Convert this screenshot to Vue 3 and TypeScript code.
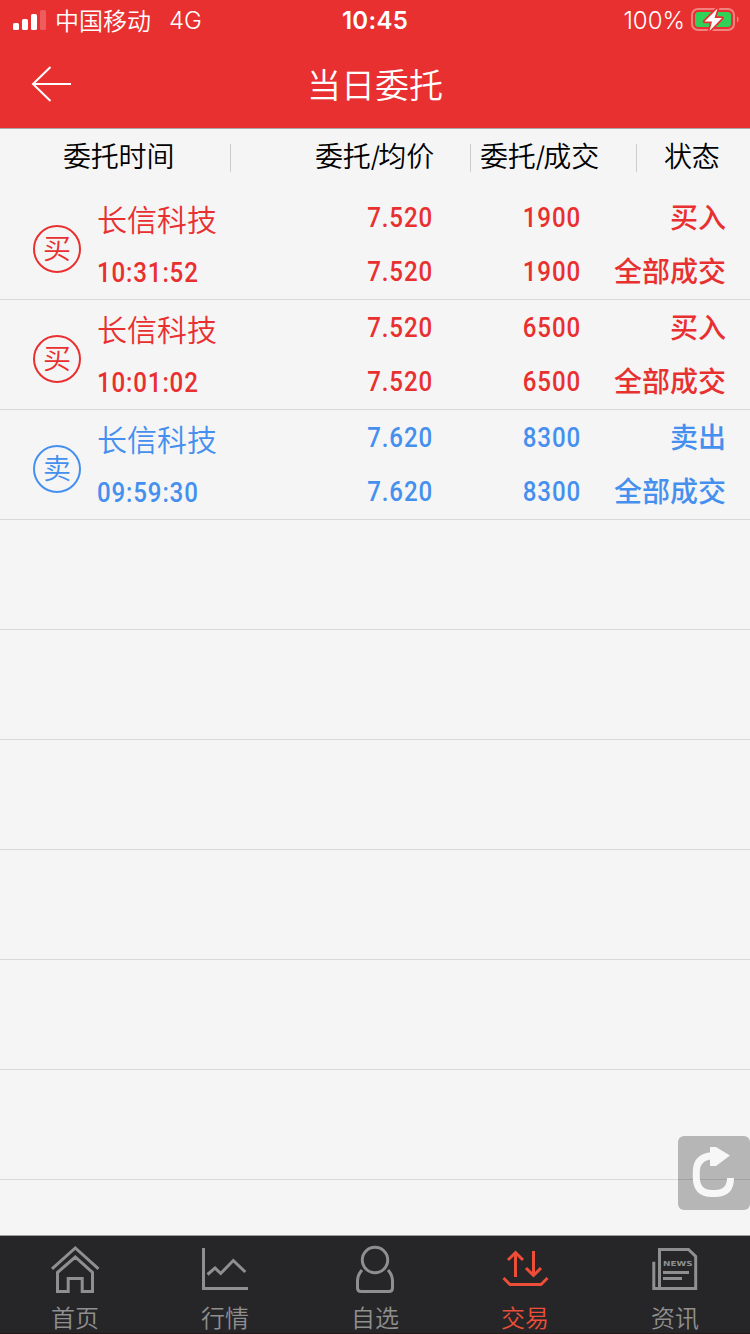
<script setup lang="ts">
interface Order {
  side: 'buy' | 'sell'
  mark: string
  name: string
  time: string
  price: string
  average: string
  amount: string
  filled: string
  action: string
  status: string
}

const orders: Order[] = [
  { side: 'buy', mark: '买', name: '长信科技', time: '10:31:52', price: '7.520', average: '7.520', amount: '1900', filled: '1900', action: '买入', status: '全部成交' },
  { side: 'buy', mark: '买', name: '长信科技', time: '10:01:02', price: '7.520', average: '7.520', amount: '6500', filled: '6500', action: '买入', status: '全部成交' },
  { side: 'sell', mark: '卖', name: '长信科技', time: '09:59:30', price: '7.620', average: '7.620', amount: '8300', filled: '8300', action: '卖出', status: '全部成交' },
]

const emptyRows = 6

const tabs = [
  { id: 'home', label: '首页' },
  { id: 'market', label: '行情' },
  { id: 'watch', label: '自选' },
  { id: 'trade', label: '交易' },
  { id: 'news', label: '资讯' },
]
const activeTab = 'trade'
</script>

<template>
  <div class="screen">
    <div class="status-bar">
      <div class="carrier">
        <svg class="signal" width="34" height="22" viewBox="0 0 34 22">
          <rect x="0" y="14" width="6" height="7" rx="1.6" />
          <rect x="9" y="10" width="6" height="11" rx="1.6" />
          <rect x="18" y="5" width="6" height="16" rx="1.6" />
          <rect x="27" y="1" width="6" height="20" rx="1.6" opacity=".22" />
        </svg>
        <span class="operator">中国移动</span>
        <span class="network">4G</span>
      </div>
      <div class="clock">10:45</div>
      <div class="power">
        <span class="percent">100%</span>
        <svg class="battery" width="50" height="26" viewBox="0 0 50 26">
          <rect x="2" y="3" width="42" height="21" rx="6" fill="none" stroke="#fff" stroke-opacity=".4" stroke-width="2" />
          <path d="M47 10.500c2 1 2 5 0 6z" fill="#fff" opacity=".45" />
          <rect x="5" y="6" width="36" height="15" rx="3.500" fill="#2fd158" />
          <path d="M27.500 2.500L14.500 15.500h7.500L19.500 25 32 12h-7.500z" fill="#fff" stroke="#e93030" stroke-width="3.500" paint-order="stroke" stroke-linejoin="round" />
        </svg>
      </div>
    </div>

    <div class="nav">
      <div class="nav-side">
        <svg width="42" height="38" viewBox="0 0 42 38" fill="none" stroke="#fff" stroke-width="2">
          <path d="M19.500 2L2 19 19.500 36M2 19h38" />
        </svg>
      </div>
      <div class="nav-title">当日委托</div>
      <div class="nav-side"></div>
    </div>

    <div class="columns">
      <div class="col c1">委托时间</div>
      <div class="col c2">委托<i>/</i>均价</div>
      <div class="col c3">委托<i>/</i>成交</div>
      <div class="col c4">状态</div>
    </div>

    <div class="list">
      <div v-for="(o, i) in orders" :key="i" class="row" :class="o.side">
        <div class="mark">{{ o.mark }}</div>
        <div class="stock">
          <div class="name">{{ o.name }}</div>
          <div class="time"><span class="num">{{ o.time }}</span></div>
        </div>
        <div class="cell price">
          <div><span class="num">{{ o.price }}</span></div>
          <div><span class="num">{{ o.average }}</span></div>
        </div>
        <div class="cell amount">
          <div><span class="num">{{ o.amount }}</span></div>
          <div><span class="num">{{ o.filled }}</span></div>
        </div>
        <div class="cell state">
          <div>{{ o.action }}</div>
          <div>{{ o.status }}</div>
        </div>
      </div>
      <div v-for="n in emptyRows" :key="'e' + n" class="row"></div>
    </div>

    <div class="refresh">
      <svg width="72" height="74" viewBox="0 0 72 74">
        <path d="M34 19.800Q18.300 21 18.300 36v5Q18.300 57.500 34 57.500h3Q52.500 57.500 52.500 42" fill="none" stroke="#f7f7f7" stroke-width="7" />
        <path d="M32 11h6l14 8.500L38 30h-6z" fill="#f7f7f7" />
      </svg>
    </div>

    <div class="tabbar">
      <div v-for="t in tabs" :key="t.id" class="tab" :class="{ active: t.id === activeTab }">
        <svg width="54" height="54" viewBox="0 0 54 54" fill="none" stroke="currentColor" stroke-width="3">
          <template v-if="t.id === 'home'">
            <path d="M4 29.800L27.300 9 50.500 29.800" />
            <path d="M9.500 33.500L27.300 18 44.500 33.500v19H34.200V39.500H20.200v13H9.500z" />
          </template>
          <path v-else-if="t.id === 'market'" d="M5.500 9v40.500H50M9.500 35.500l7.500-6.500 5.700 5.500L35.300 21.500l12 11.500" />
          <template v-else-if="t.id === 'watch'">
            <circle cx="27" cy="21" r="12.700" />
            <path d="M14 31q-4.500 5-4.500 11v7q0 3.500 3.500 3.500h28q3.500 0 3.500-3.500v-7q0-6-4.500-11" />
          </template>
          <path v-else-if="t.id === 'trade'" d="M17.500 38V14M10 21l7.500-7.500L25 21M35.500 12v24.500M28 29l7.500 7.500L43 29M5.500 39l6.500 6.500h31l6.500-6.500" />
          <template v-else>
            <path d="M11.500 49.500v-39H40.500l7.200 7V49.500H5.800V22.700M15 33.500h26M15 39.500h19" />
            <text x="15" y="27" textLength="29.500" lengthAdjust="spacingAndGlyphs" class="news">NEWS</text>
          </template>
        </svg>
        <span>{{ t.label }}</span>
      </div>
    </div>
  </div>
</template>

<style>
body {
  margin: 0;
}
</style>

<style scoped>
.screen {
  position: relative;
  display: flex;
  flex-direction: column;
  box-sizing: border-box;
  width: 750px;
  height: 1334px;
  overflow: hidden;
  background: #f5f5f5;
  font-family: Inter, "Noto Sans CJK SC", sans-serif;
}
.status-bar {
  display: grid;
  grid-template-columns: 1fr 100px 1fr;
  grid-template-rows: 40px;
  align-items: center;
  height: 40px;
  flex: none;
  background: #e93030;
  color: #fff;
  font-size: 24px;
  line-height: 36px;
}
.carrier,
.power {
  display: flex;
  align-items: center;
}
.signal {
  margin: 0 8px 1px 13px;
  fill: #fff;
}
.operator {
  font-weight: 350;
  padding-top: 3px;
}
.network {
  margin-left: 18px;
  font-weight: 350;
  padding-top: 2px;
}
.clock {
  text-align: center;
  font-weight: 600;
  letter-spacing: .3px;
  padding-top: 2px;
}
.power {
  justify-content: flex-end;
}
.percent {
  font-weight: 350;
  padding-top: 2px;
}
.battery {
  margin: 0 10px 2px 5px;
}
.nav {
  display: flex;
  align-items: center;
  justify-content: space-between;
  height: 88px;
  flex: none;
  background: #e93030;
  border-bottom: 1px solid #a9a9a9;
  color: #fff;
}
.nav-side {
  display: flex;
  width: 120px;
  padding-left: 31px;
  box-sizing: border-box;
}
.nav-title {
  font-size: 34px;
  font-weight: 350;
  padding-bottom: 2px;
}
.columns {
  display: flex;
  height: 61px;
  flex: none;
  font-size: 28px;
  font-weight: 350;
  line-height: 56px;
  color: #000;
}
.col {
  box-sizing: border-box;
  white-space: nowrap;
  letter-spacing: -.2px;
  background: linear-gradient(#ccc, #ccc) right 15px / 1px 28px no-repeat;
}
.col i {
  font-style: normal;
  letter-spacing: -2px;
}
.c1 {
  width: 231px;
  padding-left: 63px;
}
.c2 {
  width: 240px;
  padding-left: 84px;
}
.c3 {
  width: 166px;
  padding-left: 9px;
}
.c4 {
  width: 113px;
  padding-left: 27px;
  background: none;
}
.row {
  display: flex;
  box-sizing: border-box;
  height: 110px;
  border-bottom: 1px solid #d9d9d9;
}
.list {
  flex: 1;
  min-height: 0;
}
.buy {
  color: #e93030;
}
.sell {
  color: #4590ee;
}
.mark {
  box-sizing: border-box;
  width: 48px;
  height: 48px;
  margin: 35px 16px 0 33px;
  border: 2px solid currentColor;
  border-radius: 50%;
  text-align: center;
  font-size: 28px;
  font-weight: 350;
  line-height: 45px;
}
.stock {
  width: 203px;
  padding-top: 2px;
}
.name {
  font-size: 30px;
  font-weight: 350;
  line-height: 56px;
}
.time {
  line-height: 50px;
}
.cell {
  font-size: 28px;
  font-weight: 500;
  line-height: 54px;
  text-align: right;
  white-space: nowrap;
}
.num {
  display: block;
  font-family: Roboto, sans-serif;
  font-size: 28px;
  font-weight: 500;
  letter-spacing: 1px;
  transform: scaleX(.86);
  transform-origin: right;
}
.time .num {
  transform-origin: left;
}
.price {
  width: 133px;
  padding-top: 1px;
}
.amount {
  width: 148px;
  padding-top: 1px;
}
.state {
  width: 145px;
  padding-top: 1px;
}
.refresh {
  position: absolute;
  right: 0;
  top: 1136px;
  width: 72px;
  height: 74px;
  border-radius: 6px;
  background: rgba(0, 0, 0, .255);
}
.refresh svg {
  display: block;
}
.tabbar {
  display: flex;
  box-sizing: border-box;
  height: 99px;
  flex: none;
  border-top: 1px solid #9a9f9c;
  border-bottom: 1px solid #241717;
  background: #262628;
}
.tab {
  display: flex;
  flex: 1;
  flex-direction: column;
  align-items: center;
  color: #8f8f8f;
  font-size: 24px;
  font-weight: 350;
}
.tab svg {
  display: block;
  flex: none;
  margin-top: 3px;
  overflow: visible;
}
.tab span {
  line-height: 52px;
}
.tab.active {
  color: #ec4e38;
}
.news {
  fill: currentColor;
  stroke: none;
  font: 700 7px "DejaVu Sans", sans-serif;
}
</style>
